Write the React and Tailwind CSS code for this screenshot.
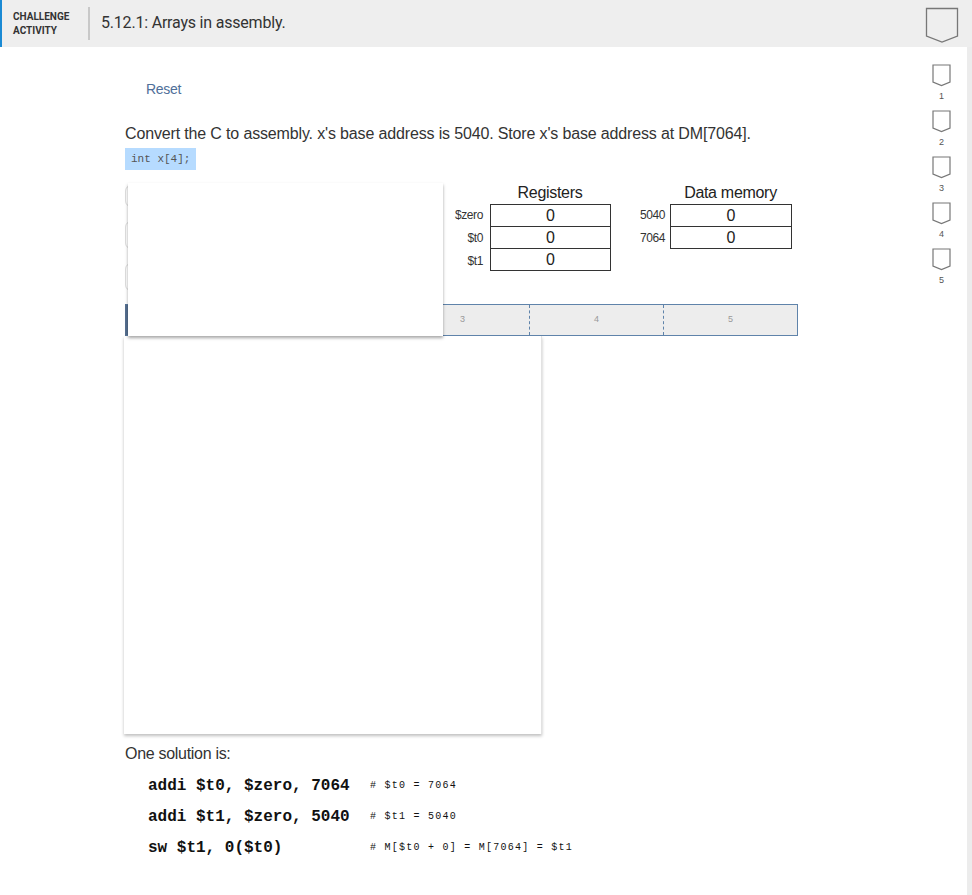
import React from "react";

const sans = { fontFamily: "'Liberation Sans', Arial, sans-serif" };

function Badge({ big }) {
  if (big) {
    return (
      <svg width="34" height="37" viewBox="0 0 34 37" className="block">
        <path d="M1.5 1.5 H32.5 V29 L17 35 L1.5 29 Z" fill="none" stroke="#777" strokeWidth="1.3" />
      </svg>
    );
  }
  return (
    <svg width="19" height="23" viewBox="0 0 19 23" className="block">
      <path d="M1 1 H18 V18 L9.5 21.5 L1 18 Z" fill="#fff" stroke="#777" strokeWidth="1.2" />
    </svg>
  );
}

const codeLines = [
  { code: "addi $t0, $zero, 7064", note: "# $t0 = 7064" },
  { code: "addi $t1, $zero, 5040", note: "# $t1 = 5040" },
  { code: "sw $t1, 0($t0)", note: "# M[$t0 + 0] = M[7064] = $t1" },
];

function Cell({ children }) {
  return (
    <div className="h-[23px] flex items-center justify-center text-[16px] text-[#222] border border-[#333] -mt-px first:mt-0">
      {children}
    </div>
  );
}

export default function App() {
  return (
    <div className="w-full min-h-[940px] bg-white text-[#333]" style={{ fontFamily: "Roboto, 'Liberation Sans', sans-serif" }}>
      {/* Header */}
      <div className="h-[47px] bg-[#eeeeee] border-l-2 border-[#1a8ad4] flex items-center">
        <div className="w-[86px] pl-[11px] text-[10px] font-bold leading-[14px] text-[#333]">
          CHALLENGE
          <br />
          ACTIVITY
        </div>
        <div className="w-[2px] h-[33px] bg-[#c8c8c8]" />
        <div className="pl-[11px] pb-[2px] text-[16px] text-[#333] tracking-[-0.2px] flex-1">5.12.1: Arrays in assembly.</div>
        <div className="pr-[13px] pt-[3px]">
          <Badge big />
        </div>
      </div>

      <div className="flex">
        {/* Main column */}
        <div className="flex-1 pl-[125px]" style={sans}>
          <div className="pl-[21px] pt-[33px] text-[14px] text-[#4f6f99] leading-[18px] tracking-[-0.3px]">Reset</div>

          <p className="mt-[25px] text-[16px] leading-[22px] text-[#333] tracking-[-0.15px]">
            Convert the C to assembly. x's base address is 5040. Store x's base address at DM[7064].
          </p>
          <div className="-mt-[1px] inline-block bg-[#b6dbff] px-[6px] h-[22px] leading-[22px] text-[11px] text-[#555]" style={{ fontFamily: "'Liberation Mono', monospace" }}>
            int x[4];
          </div>

          {/* Simulator area */}
          <div className="relative w-[673px] mt-[13px]">
            <div className="flex h-[121px]">
              {/* hidden instruction buttons */}
              <div className="w-[320px] flex flex-col gap-[14px] pt-[2px]">
                <div className="h-[22px] w-[200px] rounded-[6px] border border-[#ddd]" />
                <div className="h-[28px] w-[200px] rounded-[6px] border border-[#ddd]" />
                <div className="h-[28px] w-[200px] rounded-[6px] border border-[#ddd]" />
              </div>

              {/* Registers */}
              <div className="flex flex-col">
                <div className="ml-[45px] w-[120px] text-center text-[16px] leading-[20px] text-[#222] tracking-[-0.3px]">Registers</div>
                <div className="flex mt-[1px]">
                  <div className="w-[38px] flex flex-col text-[12px] text-[#333] text-right tracking-[-0.4px]">
                    <div className="h-[23px] leading-[23px]">$zero</div>
                    <div className="h-[23px] leading-[23px]">$t0</div>
                    <div className="h-[23px] leading-[23px]">$t1</div>
                  </div>
                  <div className="ml-[7px] w-[121px] flex flex-col">
                    <Cell>0</Cell>
                    <Cell>0</Cell>
                    <Cell>0</Cell>
                  </div>
                </div>
              </div>

              {/* Data memory */}
              <div className="flex flex-col ml-[24px]">
                <div className="ml-[35px] w-[121px] text-center text-[16px] leading-[20px] text-[#222] tracking-[-0.3px]">Data memory</div>
                <div className="flex mt-[1px]">
                  <div className="w-[30px] flex flex-col text-[12px] text-[#333] text-right tracking-[-0.4px]">
                    <div className="h-[23px] leading-[23px]">5040</div>
                    <div className="h-[23px] leading-[23px]">7064</div>
                  </div>
                  <div className="ml-[5px] w-[122px] flex flex-col">
                    <Cell>0</Cell>
                    <Cell>0</Cell>
                  </div>
                </div>
              </div>
            </div>

            {/* Progress bar */}
            <div className="flex h-[32px] border border-[#5f83aa] border-l-[3px] border-l-[#566f90] bg-[#ededed] text-[9px] text-[#999]">
              {[1, 2, 3, 4, 5].map((n) => (
                <div
                  key={n}
                  className={"flex-1 flex items-center justify-center " + (n < 5 ? "border-r border-dashed border-[#5f83aa]" : "")}
                >
                  {n}
                </div>
              ))}
            </div>

            {/* Overlay panel */}
            <div className="absolute left-[3px] top-0 w-[315px] h-[153px] bg-white shadow-[0_2px_3px_rgba(0,0,0,0.35)]" />
          </div>

          {/* Work area */}
          <div className="w-[418px] h-[398px] -ml-px bg-white border-r border-[#e2e2e2] shadow-[0_2px_3px_rgba(0,0,0,0.25)]" />

          <div className="mt-[10px] text-[16px] leading-[20px] text-[#333] tracking-[-0.3px]">One solution is:</div>

          <div className="mt-[6px] pl-[23px] flex flex-col" style={{ fontFamily: "'Liberation Mono', 'Courier New', monospace" }}>
            {codeLines.map((l) => (
              <div key={l.code} className="flex items-center h-[31px]">
                <span className="w-[222px] text-[16px] font-bold text-[#111]">{l.code}</span>
                <span className="text-[10px] text-[#111] tracking-[1.25px]">{l.note}</span>
              </div>
            ))}
          </div>

          <div className="mt-[28px] flex justify-end pr-[15px]">
            <span className="text-[14px] font-bold text-[#2a8fd6]">Feedback?</span>
          </div>
        </div>

        {/* Level sidebar */}
        <div className="w-[55px] flex flex-col items-center pt-[17px] pl-[4px]">
          {[1, 2, 3, 4, 5].map((n) => (
            <div key={n} className="flex flex-col items-center h-[46px]">
              <Badge />
              <div className="text-[9px] leading-[12px] text-[#555] mt-[3px]" style={sans}>{n}</div>
            </div>
          ))}
        </div>
        <div className="w-[5px] bg-[#ececec] min-h-[900px]" />
      </div>
    </div>
  );
}
